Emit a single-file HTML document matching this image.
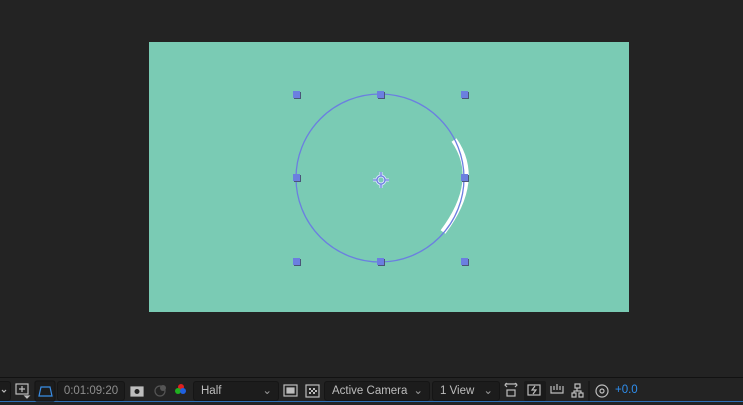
<!DOCTYPE html>
<html><head><style>
body{margin:0;width:743px;height:405px;background:#232323;position:relative;overflow:hidden;font-family:"Liberation Sans",sans-serif;}
.tb{position:absolute;left:0;top:377px;width:743px;height:25px;background:#232323;border-top:1px solid #121212;}
.bl{position:absolute;left:0;top:401px;width:743px;height:1px;background:#2d6fb8;}
.box{position:absolute;top:381px;height:20px;background:#1c1c1c;border:1px solid #151515;border-radius:3px;box-sizing:border-box;color:#bdbdbd;font-size:11.5px;line-height:18px;}
.t{position:absolute;top:384px;font-size:11.5px;color:#c8c8c8;}
</style></head><body>
<div style="position:absolute;left:149px;top:42px;width:480px;height:270px;background:#7acbb4"></div>
<svg style="position:absolute;left:0;top:0" width="743" height="405">
<path d="M 454 140 Q 482 180 443 232" fill="none" stroke="#fff" stroke-width="6"/>
<circle cx="380" cy="178" r="84" fill="none" stroke="#6b7fe0" stroke-width="1.3"/>
<g fill="#4a5578"><rect x="294" y="92" width="7" height="7"/><rect x="378" y="92" width="7" height="7"/><rect x="462" y="92" width="7" height="7"/><rect x="294" y="175" width="7" height="7"/><rect x="462" y="175" width="7" height="7"/><rect x="294" y="259" width="7" height="7"/><rect x="378" y="259" width="7" height="7"/><rect x="462" y="259" width="7" height="7"/></g>
<g fill="#6b7fe0"><rect x="293" y="91" width="7" height="7"/><rect x="377" y="91" width="7" height="7"/><rect x="461" y="91" width="7" height="7"/><rect x="293" y="174" width="7" height="7"/><rect x="461" y="174" width="7" height="7"/><rect x="293" y="258" width="7" height="7"/><rect x="377" y="258" width="7" height="7"/><rect x="461" y="258" width="7" height="7"/></g>
<g stroke="#dfe4ff" stroke-width="3" fill="none"><circle cx="381" cy="180" r="4"/><path d="M381 172v4M381 184v4M373 180h4M385 180h4"/></g>
<g stroke="#6b7fe0" stroke-width="1.3" fill="none"><circle cx="381" cy="180" r="4"/><path d="M381 172v4M381 184v4M373 180h4M385 180h4"/></g>
</svg>
<div class="tb"></div><div class="bl"></div>
<div class="box" style="left:-4px;width:15px;"></div>
<svg style="position:absolute;left:0;top:380px" width="743" height="22" fill="none" stroke="#bdbdbd" stroke-width="1.2">
<path d="M2 10l2 2 2-2"/>
<rect x="16" y="4" width="12" height="10"/><path d="M22 6v6M19 9h6"/><path d="M25 16l2 2 2-2z" fill="#bdbdbd"/>
<rect x="35" y="1" width="20" height="20" rx="2" fill="#1c1c1c" stroke="#151515"/>
<path d="M39 16l2-9h9l2 9z" stroke="#3a8ee6"/>
<rect x="131" y="7" width="12" height="9" fill="#bdbdbd"/><circle cx="137" cy="11.5" r="2.5" fill="#232323" stroke="none"/>
<circle cx="160" cy="11" r="5" stroke="#555"/><circle cx="163" cy="8" r="3" fill="#555" stroke="none"/>
<circle cx="181" cy="7" r="3" fill="#e02020" stroke="none"/><circle cx="178" cy="11" r="3" fill="#20b020" stroke="none"/><circle cx="183" cy="11" r="3" fill="#2060e0" stroke="none"/>
<rect x="284" y="5" width="13" height="11"/><rect x="287" y="8" width="7" height="5" fill="#bdbdbd"/>
<rect x="306" y="5" width="13" height="12"/><path d="M309 8h2v2h-2zM313 8h2v2h-2zM311 10h2v2h-2zM315 10h2v2h-2zM309 12h2v2h-2zM313 12h2v2h-2z" fill="#bdbdbd" stroke="none"/>
<path d="M505 4h12M507 7l-2-2 2-2M515 7l2-2-2-2"/><rect x="507" y="10" width="8" height="6"/>
<rect x="524" y="1" width="22" height="20" rx="2" fill="#1a1a1a" stroke="none"/><rect x="528" y="5" width="12" height="10"/><path d="M535 6l-3 4h4l-3 4"/>
<path d="M551 6v7h12V6M554 6v4M557 4v6M560 6v4"/>
<path d="M575 4h5v4h-5zM572 13h4v4h-4zM579 13h4v4h-4zM577 8v3M574 13v-2h7v2"/>
<path d="M589 1v20" stroke="#151515"/>
<circle cx="602" cy="11" r="6"/><circle cx="602" cy="11" r="2"/>
</svg>
<div class="box" style="left:57px;width:68px;text-align:center;color:#8e8e8e">0:01:09:20</div>
<div class="box" style="left:193px;width:86px;padding-left:7px">Half<span style="position:absolute;right:6px;color:#999">&#8964;</span></div>
<div class="box" style="left:324px;width:106px;padding-left:7px">Active Camera<span style="position:absolute;right:6px;color:#999">&#8964;</span></div>
<div class="box" style="left:432px;width:68px;padding-left:7px">1 View<span style="position:absolute;right:6px;color:#999">&#8964;</span></div>
<div class="t" style="left:615px;color:#2f8fef">+0.0</div>
</body></html>
